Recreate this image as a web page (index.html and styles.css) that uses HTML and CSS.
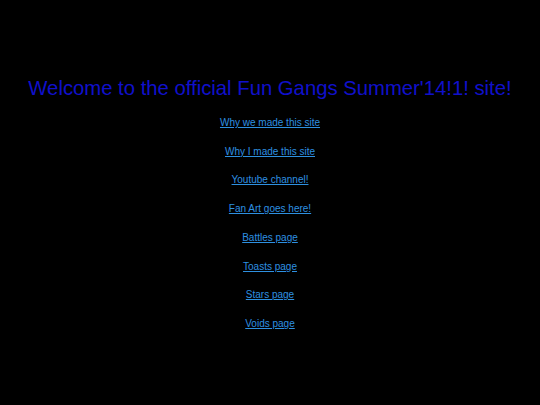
FILE: index.html
```html
<!DOCTYPE html>
<html>
<head>
<meta charset="utf-8">
<link rel="stylesheet" href="styles.css">
</head>
<body>
<div class="page">
<h1 class="title">Welcome to the official Fun Gangs Summer'14!1! site!</h1>
<nav class="links">
<a href="#">Why we made this site</a>
<a href="#">Why I made this site</a>
<a href="#">Youtube channel!</a>
<a href="#">Fan Art goes here!</a>
<a href="#">Battles page</a>
<a href="#">Toasts page</a>
<a href="#">Stars page</a>
<a href="#">Voids page</a>
</nav>
</div>
</body>
</html>
```
FILE: styles.css
```css
html, body {
  margin: 0;
  padding: 0;
  background: #000;
  height: 100%;
}
.page {
  font-family: "Liberation Sans", Arial, sans-serif;
  text-align: center;
  padding-top: 75px;
}
.title {
  margin: 0;
  font-size: 20.3px;
  font-weight: normal;
  line-height: 26px;
  color: #1010cc;
}
.links {
  display: flex;
  flex-direction: column;
  align-items: center;
  gap: 15px;
  margin-top: 15px;
}
.links a {
  font-size: 10px;
  line-height: 13.7px;
  color: #2e90e0;
  text-decoration: underline;
}
```
